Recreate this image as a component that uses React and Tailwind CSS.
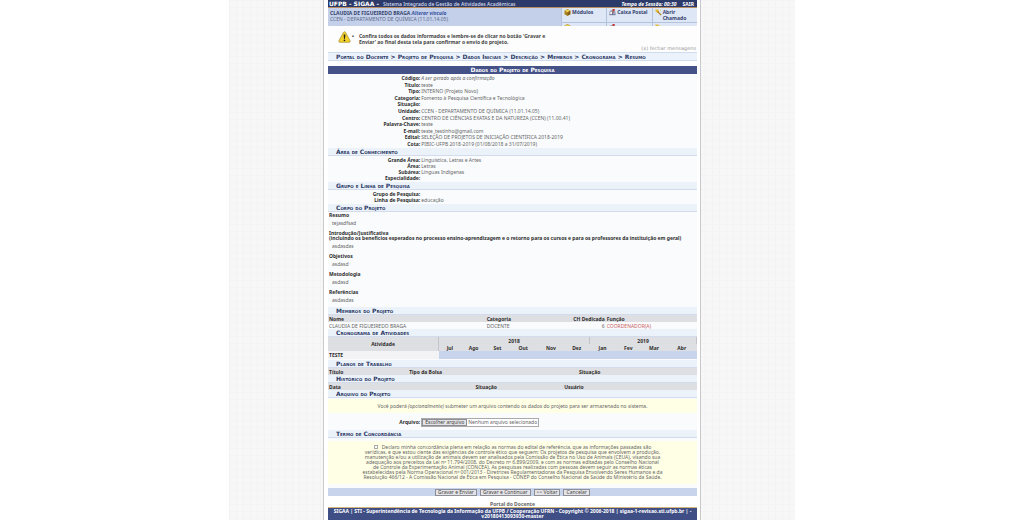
import React from 'react';

const project = [
  ['Código', 'A ser gerado após a confirmação', true],
  ['Título', 'teste'],
  ['Tipo', 'INTERNO (Projeto Novo)'],
  ['Categoria', 'Fomento à Pesquisa Científica e Tecnológica'],
  ['Situação', ''],
  ['Unidade', 'CCEN - DEPARTAMENTO DE QUÍMICA (11.01.14.05)'],
  ['Centro', 'CENTRO DE CIÊNCIAS EXATAS E DA NATUREZA (CCEN) (11.00.41)'],
  ['Palavra-Chave', 'teste'],
  ['E-mail', 'teste_testinho@gmail.com'],
  ['Edital', 'SELEÇÃO DE PROJETOS DE INICIAÇÃO CIENTÍFICA 2018-2019'],
  ['Cota', 'PIBIC-UFPB 2018-2019 (01/08/2018 a 31/07/2019)'],
];
const area = [
  ['Grande Área', 'Linguística, Letras e Artes'],
  ['Área', 'Letras'],
  ['Subárea', 'Línguas Indígenas'],
  ['Especialidade', ''],
];
const group = [
  ['Grupo de Pesquisa', ''],
  ['Linha de Pesquisa', 'educação'],
];
const months = [
  ['Jul', 'w-[6%]'],
  ['Ago', 'w-[7%]'],
  ['Set', 'w-[6%]'],
  ['Out', 'w-[8%]'],
  ['Nov', 'w-[7%]'],
  ['Dez', 'w-[7%]'],
  ['Jan', 'w-[7%]'],
  ['Fev', 'w-[7%]'],
  ['Mar', 'w-[7%]'],
  ['Abr', 'w-[8%]'],
];

function Band({ children }) {
  return (
    <h2 className="flex h-2 items-center border-b border-[#d3dcec] bg-[#ebf2fa] pl-2 font-['DejaVu_Sans',sans-serif] text-[6px] leading-[6px] font-bold text-[#2c3965] [font-variant:small-caps]">
      {children}
    </h2>
  );
}

function Fields({ rows, className }) {
  return (
    <dl className={'grid content-stretch py-px leading-[6px] ' + className}>
      {rows.map(([label, value, italic]) => (
        <div key={label} className="flex items-center gap-px">
          <dt className="w-1/4 shrink-0 text-right font-bold text-[#2e2e2e]">{label}:</dt>
          <dd className={italic ? 'italic' : ''}>{value}</dd>
        </div>
      ))}
    </dl>
  );
}

function BodyItem({ title, note, text }) {
  return (
    <div className="leading-[6px]">
      <h3 className="font-bold text-[#2e2e2e]">{title}</h3>
      {note && <p className="leading-[5px] font-bold text-[#2e2e2e]">{note}</p>}
      <p className="mt-0.5 pl-[3px]">{text}</p>
    </div>
  );
}

function Cube() {
  return (
    <svg viewBox="0 0 16 16" className="size-[7px] shrink-0">
      <path d="M8 0l7 4v8l-7 4-7-4V4z" fill="#a98422" />
      <path d="M8 1l6 3-6 4-6-4z" fill="#f0cc55" />
      <path d="M8 8l6-4v8l-6 3z" fill="#80601a" />
    </svg>
  );
}
function Mailbox() {
  return (
    <svg viewBox="0 0 16 16" className="size-[7px] shrink-0">
      <path d="M1 7q0-4 4-4h6q4 0 4 4v6H1z" fill="#9aa4ba" />
      <path d="M3 7h5v5H3z" fill="#f8f8ff" />
      <path d="M8 0h5v4H10v5H8z" fill="#c32f28" />
      <path d="M1 13h14M8 13V8" stroke="#4a5068" strokeWidth="1.5" />
    </svg>
  );
}
function Wand() {
  return (
    <svg viewBox="0 0 16 16" className="size-[7px] shrink-0">
      <path d="M1 1h7l1 5-4 3-4-4z" fill="#e5b93b" />
      <path d="M6 6l8 8" stroke="#a77b20" strokeWidth="3" />
      <path d="M11 1l3 3-2 2" fill="#f1d36c" />
    </svg>
  );
}
function Warning() {
  return (
    <svg viewBox="0 0 36 34" className="h-[12px] w-[13px] shrink-0">
      <path d="M18 2q2 0 3 2l13 24q1 4-3 4H5q-4 0-3-4L15 4q1-2 3-2z" fill="#f4d328" stroke="#a58b2f" strokeWidth="2" />
      <path d="M15.500 10h5l-1 12h-3z" fill="#222" />
      <circle cx="18" cy="26.500" r="2.500" fill="#222" />
    </svg>
  );
}

const cell = 'flex items-start border-l border-[#b4c2df] bg-[#dee7f6] px-0.5 pt-px';

function QuickLink({ icon, children }) {
  return (
    <a href="#" className={cell + ' h-[15px] gap-px border-b pt-0.5 font-bold text-[#34426d]'}>
      {icon}
      <span>{children}</span>
    </a>
  );
}

function Button({ children, ...rest }) {
  return (
    <button className="h-[7px] border border-[#8e8e96] bg-[#e4e4e8] px-0.5 leading-[5px] whitespace-nowrap text-[#444]" {...rest}>
      {children}
    </button>
  );
}

const headRow = 'h-[7px] bg-[#dedfe3] text-left text-[#2e2e2e]';

export default function App() {
  return (
    <div className="min-h-screen bg-white font-['Noto_Sans','Verdana',sans-serif] text-[5px] leading-[6px] text-[#666]">
      <div className="mx-auto w-full max-w-[566px] bg-[#f7f7f7] bg-[linear-gradient(to_right,#f3f3f3_1px,transparent_1px),linear-gradient(to_bottom,#f4f4f4_1px,transparent_1px)] bg-[size:7px_7px]">
        <div className="mx-auto w-full max-w-[378px] border-x border-[#c9c9cc] bg-white pr-[3px] pl-1">
          <header>
            <div className="flex h-2 items-center border-b border-[#b98d62] bg-[#2b3a68] px-px font-bold text-white">
              <strong className="font-['DejaVu_Sans',sans-serif] text-[6px]">UFPB - SIGAA -</strong>
              <span className="ml-1 font-medium text-[#d8dff0]">Sistema Integrado de Gestão de Atividades Acadêmicas</span>
              <span className="ml-auto italic">Tempo de Sessão: 00:30</span>
              <a href="#" className="ml-1.5 pr-0.5">SAIR</a>
            </div>
            <div className="flex h-[18px] justify-between overflow-hidden bg-[#c4d0ea] pl-0.5">
              <div className="pt-0.5">
                <p className="font-bold text-[#34426d]">
                  CLAUDIA DE FIGUEIREDO BRAGA <a href="#" className="text-[#3650a0] italic">Alterar vínculo</a>
                </p>
                <p className="text-[#5d6a8c]">CCEN - DEPARTAMENTO DE QUÍMICA (11.01.14.05)</p>
              </div>
              <nav className="grid w-[136px] grid-cols-3">
                <QuickLink icon={<Cube />}>Módulos</QuickLink>
                <QuickLink icon={<Mailbox />}>Caixa Postal</QuickLink>
                <QuickLink icon={<Wand />}>Abrir<br />Chamado</QuickLink>
                <span className={cell}><Cube /></span>
                <span className={cell}><Mailbox /></span>
                <span className={cell}><Wand /></span>
              </nav>
            </div>
          </header>

          <section className="flex h-[26px] flex-col justify-between bg-[#fdfdfe] pt-[5px]">
            <div className="flex gap-px pl-2.5">
              <Warning />
              <ul className="pt-0.5 font-bold text-[#444]">
                <li className="flex gap-[5px]">
                  <span>•</span>
                  <span>Confira todos os dados informados e lembre-se de clicar no botão 'Gravar e<br />Enviar' ao final desta tela para confirmar o envio do projeto.</span>
                </li>
              </ul>
            </div>
            <a href="#" className="pr-px pb-px text-right font-['DejaVu_Sans',sans-serif] text-[#999]">(x) fechar mensagens</a>
          </section>

          <nav className="flex h-[9px] items-center border-y border-[#cfdcf0] bg-[#ebf2fb] pl-2 font-['DejaVu_Sans',sans-serif] text-[6px] font-bold whitespace-nowrap text-[#2c3965] [font-variant:small-caps]">
            Portal do Docente &gt; Projeto de Pesquisa &gt; Dados Iniciais &gt; Descrição &gt; Membros &gt; Cronograma &gt; Resumo
          </nav>

          <form className="mt-[5px] bg-[#f9fbfd]" onSubmit={(e) => e.preventDefault()}>
            <h1 className="h-2 bg-[#445288] text-center font-['DejaVu_Sans',sans-serif] text-[6px] leading-[7px] font-bold text-white [font-variant:small-caps]">
              Dados do Projeto de Pesquisa
            </h1>
            <Fields rows={project} className="min-h-[74px]" />
            <Band>Área de Conhecimento</Band>
            <Fields rows={area} className="min-h-[26px]" />
            <Band>Grupo e Linha de Pesquisa</Band>
            <Fields rows={group} className="min-h-[13px]" />
            <Band>Corpo do Projeto</Band>
            <div className="flex flex-col gap-1 px-px pb-1">
              <BodyItem title="Resumo" text="tejasdfsad" />
              <BodyItem
                title="Introdução/Justificativa"
                note="(incluindo os benefícios esperados no processo ensino-aprendizagem e o retorno para os cursos e para os professores da instituição em geral)"
                text="asdasdas"
              />
              <BodyItem title="Objetivos" text="asdasd" />
              <BodyItem title="Metodologia" text="asdasd" />
              <BodyItem title="Referências" text="asdasdas" />
            </div>

            <Band>Membros do Projeto</Band>
            <table className="w-full table-fixed">
              <colgroup><col className="w-[43%]" /><col className="w-[23%]" /><col className="w-[9%]" /><col /></colgroup>
              <thead>
                <tr className={headRow}>
                  <th className="pl-px">Nome</th><th>Categoria</th>
                  <th className="text-right whitespace-nowrap">CH Dedicada</th><th className="pl-0.5">Função</th>
                </tr>
              </thead>
              <tbody>
                <tr className="h-[7px]">
                  <td className="pl-px">CLAUDIA DE FIGUEIREDO BRAGA</td><td>DOCENTE</td>
                  <td className="text-right">6</td><td className="pl-0.5 text-[#cc6262]">COORDENADOR(A)</td>
                </tr>
              </tbody>
            </table>

            <Band>Cronograma de Atividades</Band>
            <table className="w-full table-fixed">
              <colgroup>
                <col className="w-[30%]" />
                {months.map(([m, width]) => <col key={m} className={width} />)}
              </colgroup>
              <thead className="bg-[#dedfe3] text-[#2e2e2e]">
                <tr className="h-[7px]">
                  <th rowSpan={2} className="border-r border-[#c3c4cb]">Atividade</th>
                  <th colSpan={6}>2018</th>
                  <th colSpan={4} className="border-x border-[#c3c4cb]">2019</th>
                </tr>
                <tr className="h-[7px]">
                  {months.map(([m]) => <th key={m}>{m}</th>)}
                </tr>
              </thead>
              <tbody>
                <tr className="h-2">
                  <th className="bg-[#f3f3f5] pl-px text-left text-[#2e2e2e]">TESTE</th>
                  <td colSpan={10} className="bg-[#c8d3ec]" />
                </tr>
              </tbody>
            </table>

            <div className="mt-px">
              <Band>Planos de Trabalho</Band>
            </div>
            <table className="w-full table-fixed">
              <colgroup><col className="w-[22%]" /><col className="w-[46%]" /><col /></colgroup>
              <thead><tr className={headRow}><th className="pl-px">Título</th><th>Tipo da Bolsa</th><th>Situação</th></tr></thead>
            </table>
            <Band>Histórico do Projeto</Band>
            <table className="w-full table-fixed">
              <colgroup><col className="w-[40%]" /><col className="w-[24%]" /><col /></colgroup>
              <thead><tr className={headRow}><th className="pl-px">Data</th><th>Situação</th><th>Usuário</th></tr></thead>
            </table>

            <Band>Arquivo do Projeto</Band>
            <p className="my-px bg-[#ffffe6] py-1 text-center">
              Você poderá <em>(opcionalmente)</em> submeter um arquivo contendo os dados do projeto para ser armazenado no sistema.
            </p>
            <div className="flex h-4 items-center gap-px">
              <label htmlFor="arquivo" className="w-1/4 text-right font-bold text-[#2e2e2e]">Arquivo:</label>
              <div className="flex items-center border border-[#aaa] bg-white">
                <Button id="arquivo" type="button">Escolher arquivo</Button>
                <span className="px-px leading-[5px]">Nenhum arquivo selecionado</span>
              </div>
            </div>
            <Band>Termo de Concordância</Band>
            <div className="mt-[3px] bg-[#ffffe6] px-4 py-1 text-center leading-[5px]">
              <input id="termo" type="checkbox" className="mr-1 size-[4px] appearance-none border border-[#aaa] bg-white" />
              <label htmlFor="termo">
                Declaro minha concordância plena em relação as normas do edital de referência, que as informações passadas são<br />
                verídicas, e que estou ciente das exigências de controle ético que seguem: Os projetos de pesquisa que envolvem a produção,<br />
                manutenção e/ou a utilização de animais devem ser analisados pela Comissão de Ética no Uso de Animais (CEUA), visando sua<br />
                adequação aos preceitos da Lei nº 11.794/2008, do Decreto nº 6.899/2009, e com as normas editadas pelo Conselho Nacional<br />
                de Controle da Experimentação Animal (CONCEA). As pesquisas realizadas com pessoas devem seguir as normas éticas<br />
                estabelecidas pela Norma Operacional nº 001/2013 - Diretrizes Regulamentadoras da Pesquisa Envolvendo Seres Humanos e da<br />
                Resolução 466/12 - A Comissão Nacional de Ética em Pesquisa - CONEP do Conselho Nacional de Saúde do Ministério da Saúde.
              </label>
            </div>
            <div className="mt-1 flex h-2 items-center justify-center gap-[3px] bg-[#c8d3ec]">
              <Button>Gravar e Enviar</Button>
              <Button>Gravar e Continuar</Button>
              <Button>&lt;&lt; Voltar</Button>
              <Button>Cancelar</Button>
            </div>
          </form>

          <p className="bg-white pt-[5px] text-center font-bold"><a href="#">Portal do Docente</a></p>
          <footer className="border-t border-[#d5b57a] bg-[#3f4e85] py-px text-center leading-[5px] font-bold text-white">
            SIGAA | STI - Superintendência de Tecnologia da Informação da UFPB / Cooperação UFRN - Copyright © 2006-2018 | sigaa-1-revisao.sti.ufpb.br | -<br />
            v20180413093930-master
          </footer>
        </div>
      </div>
    </div>
  );
}
